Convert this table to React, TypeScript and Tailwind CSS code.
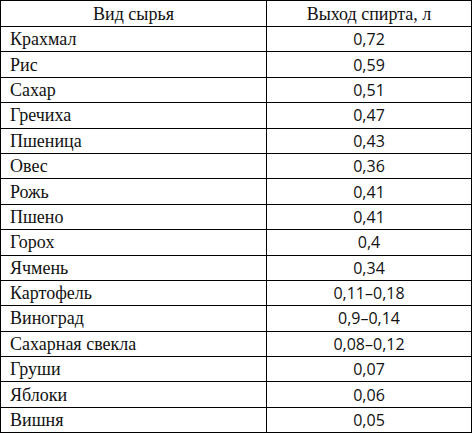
const rows: [string, string][] = [
  ["Крахмал", "0,72"],
  ["Рис", "0,59"],
  ["Сахар", "0,51"],
  ["Гречиха", "0,47"],
  ["Пшеница", "0,43"],
  ["Овес", "0,36"],
  ["Рожь", "0,41"],
  ["Пшено", "0,41"],
  ["Горох", "0,4"],
  ["Ячмень", "0,34"],
  ["Картофель", "0,11–0,18"],
  ["Виноград", "0,9–0,14"],
  ["Сахарная свекла", "0,08–0,12"],
  ["Груши", "0,07"],
  ["Яблоки", "0,06"],
  ["Вишня", "0,05"],
];

export default function App() {
  return (
    <div className="w-[473px] h-[436px] bg-white text-[#111] font-['Liberation_Serif',serif]">
      <div className="w-[472px] border-[1.5px] border-black">
        <div className="grid grid-cols-[266px_1fr] h-[25px] text-[18px] leading-none">
          <div className="flex items-center justify-center border-r-[1.5px] border-black">Вид сырья</div>
          <div className="flex items-center justify-center">Выход спирта, л</div>
        </div>
        {rows.map(([name, value]) => (
          <div key={name} className="grid grid-cols-[266px_1fr] h-[25.4px] border-t-[1.5px] border-black text-[18px] leading-none">
            <div className="flex items-center pl-[9px] border-r-[1.5px] border-black">{name}</div>
            <div className="flex items-center justify-center font-['Open_Sans',sans-serif] text-[16px]">{value}</div>
          </div>
        ))}
      </div>
    </div>
  );
}
